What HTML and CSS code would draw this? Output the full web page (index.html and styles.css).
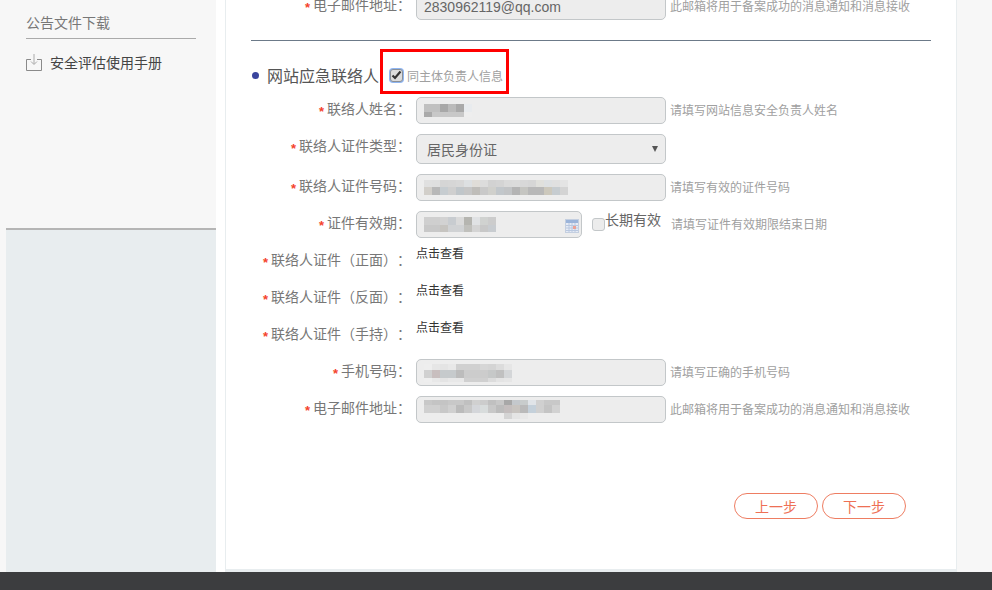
FILE: index.html
```html
<!DOCTYPE html>
<html lang="zh-CN">
<head>
<meta charset="utf-8">
<title>网站应急联络人</title>
<link rel="stylesheet" href="styles.css">
</head>
<body>
<div class="main">
  <aside class="sidebar">
    <div class="side-top">
      <div class="side-title">公告文件下载</div>
      <a class="side-link">
        <svg class="dl-icon" width="16" height="17" viewBox="0 0 16 17" fill="none" stroke="#8a8a8a" stroke-width="1">
          <path d="M5 5.500H.5v11h15v-11H11"/>
          <path d="M8 0v10M5 7.500 8 10.500 11 7.500" stroke="#aaa"/>
        </svg>
        <span>安全评估使用手册</span>
      </a>
    </div>
    <div class="side-lower"></div>
  </aside>
  <div class="gutter"></div>
  <main class="card">
    <form class="form">
      <div class="row">
        <label class="label"><i class="star">*</i>电子邮件地址<b class="colon">：</b></label>
        <div class="field"><span class="value">2830962119@qq.com</span></div>
        <span class="hint">此邮箱将用于备案成功的消息通知和消息接收</span>
      </div>

      <hr class="divider">

      <div class="section">
        <span class="bullet"></span>
        <h2 class="section-title">网站应急联络人</h2>
        <span class="check check-on">
          <svg width="11" height="10" viewBox="0 0 11 10"><path d="M1.500 5.500 4 8l5.500-6.500" fill="none" stroke="#333" stroke-width="2.200"/></svg>
        </span>
        <span class="check-text">同主体负责人信息</span>
        <div class="highlight"></div>
      </div>

      <div class="row">
        <label class="label"><i class="star">*</i>联络人姓名<b class="colon">：</b></label>
        <div class="field">
          <svg class="mosaic" width="48" height="13" viewBox="0 0 48 13">
            <rect x="0" y="0" width="16" height="8" fill="#c0c0c0"/><rect x="16" y="0" width="8" height="8" fill="#a8a8a8"/><rect x="24" y="0" width="8" height="8" fill="#bbb"/><rect x="32" y="0" width="8" height="8" fill="#a9a9a9"/><rect x="40" y="0" width="8" height="8" fill="#e8ebee"/>
            <rect x="0" y="8" width="8" height="5" fill="#aaa"/><rect x="8" y="8" width="32" height="5" fill="#c8c8c8"/><rect x="40" y="8" width="8" height="5" fill="#eee"/>
          </svg>
        </div>
        <span class="hint">请填写网站信息安全负责人姓名</span>
      </div>

      <div class="row row-select">
        <label class="label"><i class="star">*</i>联络人证件类型<b class="colon">：</b></label>
        <div class="field field-select"><span class="select-text">居民身份证</span><span class="caret"></span></div>
      </div>

      <div class="row">
        <label class="label"><i class="star">*</i>联络人证件号码<b class="colon">：</b></label>
        <div class="field">
          <svg class="mosaic" width="144" height="15" viewBox="0 0 144 15">
            <rect x="0" width="8" height="7" fill="#e0e0e0"/><rect x="8" width="8" height="7" fill="#dfdfdf"/><rect x="16" width="8" height="7" fill="#d5d5d5"/><rect x="24" width="8" height="7" fill="#d6d6d6"/><rect x="32" width="8" height="7" fill="#d8d8d8"/><rect x="40" width="8" height="7" fill="#dde0e2"/><rect x="48" width="8" height="7" fill="#e0ddd8"/><rect x="56" width="8" height="7" fill="#dcdcdc"/><rect x="64" width="8" height="7" fill="#d2d2d2"/><rect x="72" width="8" height="7" fill="#d4d4d4"/><rect x="80" width="8" height="7" fill="#dadada"/><rect x="88" width="8" height="7" fill="#dbdbdb"/><rect x="96" width="8" height="7" fill="#d8d8d8"/><rect x="104" width="8" height="7" fill="#d6d6d6"/><rect x="112" width="8" height="7" fill="#e0e0dc"/><rect x="120" width="8" height="7" fill="#dde0e2"/><rect x="128" width="8" height="7" fill="#e0e0e0"/><rect x="136" width="8" height="7" fill="#e4e4e4"/>
            <rect x="0" y="7" width="8" height="8" fill="#d2cfca"/><rect x="8" y="7" width="8" height="8" fill="#b8b8b8"/><rect x="16" y="7" width="8" height="8" fill="#c6ccd0"/><rect x="24" y="7" width="8" height="8" fill="#cfcfcf"/><rect x="32" y="7" width="8" height="8" fill="#c0c6ca"/><rect x="40" y="7" width="8" height="8" fill="#c6c6c6"/><rect x="48" y="7" width="8" height="8" fill="#bfbdb9"/><rect x="56" y="7" width="8" height="8" fill="#c9c9c9"/><rect x="64" y="7" width="8" height="8" fill="#d0d0cc"/><rect x="72" y="7" width="8" height="8" fill="#c2c7cb"/><rect x="80" y="7" width="8" height="8" fill="#c2c4c6"/><rect x="88" y="7" width="8" height="8" fill="#b4b4b4"/><rect x="96" y="7" width="8" height="8" fill="#c5c5c1"/><rect x="104" y="7" width="8" height="8" fill="#b8b8b8"/><rect x="112" y="7" width="8" height="8" fill="#b8b8b8"/><rect x="120" y="7" width="8" height="8" fill="#ccc8bc"/><rect x="128" y="7" width="8" height="8" fill="#c6ccd0"/><rect x="136" y="7" width="8" height="8" fill="#d4d4d4"/>
          </svg>
        </div>
        <span class="hint">请填写有效的证件号码</span>
      </div>

      <div class="row">
        <label class="label"><i class="star">*</i>证件有效期<b class="colon">：</b></label>
        <div class="field field-date">
          <svg class="mosaic" width="72" height="15" viewBox="0 0 72 15">
            <rect x="0" width="8" height="8" fill="#cfcfcf"/><rect x="8" width="8" height="8" fill="#cfcfcf"/><rect x="16" width="8" height="8" fill="#d2d2d2"/><rect x="24" width="8" height="8" fill="#c8ccd0"/><rect x="32" width="8" height="8" fill="#dadada"/><rect x="40" width="8" height="8" fill="#b5b5b0"/><rect x="48" width="8" height="8" fill="#e0e2e4"/><rect x="56" width="8" height="8" fill="#d0d2d0"/><rect x="64" width="8" height="8" fill="#ccc"/>
            <rect x="0" y="8" width="8" height="7" fill="#c8c8c8"/><rect x="8" y="8" width="8" height="7" fill="#c8c8c8"/><rect x="16" y="8" width="8" height="7" fill="#c6c4c0"/><rect x="24" y="8" width="8" height="7" fill="#d0d2d4"/><rect x="32" y="8" width="8" height="7" fill="#d0d2d4"/><rect x="40" y="8" width="8" height="7" fill="#c0c0bc"/><rect x="48" y="8" width="8" height="7" fill="#d4d4d4"/><rect x="56" y="8" width="8" height="7" fill="#c8c8c8"/><rect x="64" y="8" width="8" height="7" fill="#c8ccd0"/>
          </svg>
          <svg class="calendar" width="14" height="14" viewBox="0 0 14 14">
            <rect x=".5" y=".5" width="13" height="13" fill="#e6ebf5" stroke="#c4cfe0"/>
            <rect x="1" y="1" width="12" height="3" fill="#9bb4da"/>
            <path d="M1 6.500h12M1 9h12M1 11.500h12M4 4v9M7 4v9M10 4v9" stroke="#b9c8e0" stroke-width="1"/>
            <rect x="8" y="7" width="3" height="3" fill="#eba195"/>
          </svg>
        </div>
        <span class="check check-off"></span>
        <span class="long-term">长期有效</span>
        <span class="hint hint-date">请填写证件有效期限结束日期</span>
      </div>

      <div class="row">
        <label class="label"><i class="star">*</i>联络人证件<span class="paren">（</span>正面<span class="paren">）</span><b class="colon">：</b></label>
        <a class="view-link">点击查看</a>
      </div>
      <div class="row">
        <label class="label"><i class="star">*</i>联络人证件<span class="paren">（</span>反面<span class="paren">）</span><b class="colon">：</b></label>
        <a class="view-link">点击查看</a>
      </div>
      <div class="row">
        <label class="label"><i class="star">*</i>联络人证件<span class="paren">（</span>手持<span class="paren">）</span><b class="colon">：</b></label>
        <a class="view-link">点击查看</a>
      </div>

      <div class="row">
        <label class="label"><i class="star">*</i>手机号码<b class="colon">：</b></label>
        <div class="field">
          <svg class="mosaic mosaic-phone" width="88" height="18" viewBox="0 0 88 18">
            <rect x="0" width="8" height="6" fill="#eee"/><rect x="8" width="8" height="6" fill="#e6e6e6"/><rect x="16" width="8" height="6" fill="#e4e4e4"/><rect x="24" width="8" height="6" fill="#e8e8e8"/><rect x="32" width="24" height="6" fill="#d0d0d0"/><rect x="56" width="8" height="6" fill="#d6d6d6"/><rect x="64" width="8" height="6" fill="#d4d4d4"/><rect x="72" width="8" height="6" fill="#dcdcdc"/><rect x="80" width="8" height="6" fill="#e6e6e6"/>
            <rect x="0" y="6" width="8" height="8" fill="#d0d0d0"/><rect x="8" y="6" width="8" height="8" fill="#c8bebe"/><rect x="16" y="6" width="16" height="8" fill="#c6cacc"/><rect x="32" y="6" width="8" height="8" fill="#bcbcbc"/><rect x="40" y="6" width="24" height="8" fill="#ccc"/><rect x="64" y="6" width="8" height="8" fill="#c6c8c8"/><rect x="72" y="6" width="8" height="8" fill="#c0c0c0"/><rect x="80" y="6" width="8" height="8" fill="#d4d6d8"/>
            <rect x="0" y="14" width="8" height="4" fill="#eee"/><rect x="8" y="14" width="8" height="4" fill="#e8e8e8"/><rect x="16" y="14" width="8" height="4" fill="#e4e4e4"/><rect x="24" y="14" width="16" height="4" fill="#e8e8e8"/><rect x="40" y="14" width="24" height="4" fill="#d0d0d0"/><rect x="64" y="14" width="8" height="4" fill="#dcdcdc"/><rect x="72" y="14" width="8" height="4" fill="#e4e4e4"/><rect x="80" y="14" width="8" height="4" fill="#e6e6e6"/>
          </svg>
        </div>
        <span class="hint">请填写正确的手机号码</span>
      </div>

      <div class="row">
        <label class="label"><i class="star">*</i>电子邮件地址<b class="colon">：</b></label>
        <div class="field">
          <svg class="mosaic mosaic-email" width="136" height="19" viewBox="0 0 136 19">
            <rect x="0" width="8" height="5" fill="#c8c8c8"/><rect x="8" width="16" height="5" fill="#c4c4c4"/><rect x="24" width="16" height="5" fill="#c8c8c8"/><rect x="40" width="8" height="5" fill="#c0c0c0"/><rect x="48" width="8" height="5" fill="#d0d0d0"/><rect x="56" width="8" height="5" fill="#ccc"/><rect x="64" width="8" height="5" fill="#c0c0c0"/><rect x="72" width="8" height="5" fill="#c8c8c8"/><rect x="80" width="8" height="5" fill="#a8a8a8"/><rect x="88" width="8" height="5" fill="#c4c8cc"/><rect x="96" width="8" height="5" fill="#c8cccc"/><rect x="104" width="8" height="5" fill="#e0e4e8"/><rect x="112" width="8" height="5" fill="#d0d0d0"/><rect x="120" width="16" height="5" fill="#c8c8c8"/>
            <rect x="0" y="5" width="16" height="8" fill="#d0d0d0"/><rect x="16" y="5" width="8" height="8" fill="#c8c8c8"/><rect x="24" y="5" width="8" height="8" fill="#d0d0d0"/><rect x="32" y="5" width="8" height="8" fill="#bbb"/><rect x="40" y="5" width="8" height="8" fill="#c8c8c8"/><rect x="48" y="5" width="8" height="8" fill="#d4d6da"/><rect x="56" y="5" width="8" height="8" fill="#d8dcdc"/><rect x="64" y="5" width="8" height="8" fill="#c8c8c8"/><rect x="72" y="5" width="8" height="8" fill="#bcbcbc"/><rect x="80" y="5" width="8" height="8" fill="#c4bebe"/><rect x="88" y="5" width="8" height="8" fill="#c8c4c0"/><rect x="96" y="5" width="8" height="8" fill="#bababa"/><rect x="104" y="5" width="8" height="8" fill="#c4d0da"/><rect x="112" y="5" width="8" height="8" fill="#d0d0d0"/><rect x="120" y="5" width="8" height="8" fill="#c4c4c4"/><rect x="128" y="5" width="8" height="8" fill="#d2d2d2"/>
            <rect x="80" y="13" width="8" height="6" fill="#d4d4d4"/><rect x="88" y="13" width="8" height="6" fill="#e4e4e4"/><rect x="96" y="13" width="8" height="6" fill="#e8e8e8"/>
          </svg>
        </div>
        <span class="hint">此邮箱将用于备案成功的消息通知和消息接收</span>
      </div>

      <div class="actions">
        <button type="button" class="btn">上一步</button>
        <button type="button" class="btn">下一步</button>
      </div>
    </form>
  </main>
</div>
<footer class="footer"></footer>
</body>
</html>
```

FILE: styles.css
```css
* { box-sizing: border-box; }

html, body { height: 100%; }

body {
  margin: 0;
  height: 590px;
  overflow: hidden;
  background: #f7f7f7;
  color: #666;
  font-family: "Noto Sans CJK SC", "Liberation Sans", sans-serif;
  font-size: 14px;
  display: flex;
  flex-direction: column;
}

.main {
  height: 572px;
  display: flex;
  overflow: hidden;
}

/* sidebar */
.sidebar {
  margin-left: 6px;
  width: 210px;
  display: flex;
  flex-direction: column;
}

.side-top {
  height: 228px;
  padding: 0 20px;
}

.side-title {
  height: 39px;
  padding-top: 12px;
  line-height: 20px;
  border-bottom: 1px solid #aaa;
  color: #777;
}

.side-link {
  display: flex;
  align-items: center;
  gap: 8px;
  margin-top: 13px;
  height: 20px;
  color: #444;
}

.side-lower {
  flex: 1;
  background: #e8edef;
  border-top: 2px solid #b5b5b5;
}

.gutter {
  width: 9px;
  background: #fff;
}

/* card */
.card {
  width: 732px;
  height: 572px;
  padding-left: 25px;
  background: #fff;
  border-left: 1px solid #e8edef;
  border-right: 1px solid #e8edef;
  border-bottom: 3px solid #e8edef;
  overflow: hidden;
}

.form {
  width: 680px;
  margin-top: -7px;
}

.row {
  display: flex;
  align-items: flex-start;
  height: 27px;
  margin-bottom: 10px;
}

.row-select { height: 30px; }

.label {
  flex: none;
  width: 160px;
  margin-right: 5px;
  height: 27px;
  line-height: 23px;
  text-align: right;
  color: #777;
  white-space: nowrap;
  text-spacing-trim: space-all;
}

.star {
  display: inline-block;
  width: 8px;
  font-style: normal;
  font-weight: bold;
  font-size: 13px;
  color: #f4432c;
  font-family: "Liberation Sans", sans-serif;
  text-align: left;
  vertical-align: -2px;
  line-height: 14px;
}

.colon, .paren {
  font-family: "Noto Sans CJK TC", sans-serif;
  font-weight: normal;
}

.field {
  flex: none;
  position: relative;
  width: 250px;
  height: 27px;
  background: #ededed;
  border: 1px solid #c3c7c9;
  border-radius: 5px;
  padding-left: 7px;
  display: flex;
  align-items: center;
}

.value {
  font-family: "Liberation Sans", sans-serif;
  font-size: 14px;
  color: #666;
}

.mosaic { display: block; flex: none; }

.field-select {
  height: 30px;
  padding-left: 10px;
  justify-content: space-between;
  padding-right: 7px;
}

.select-text { color: #666; }

.caret {
  width: 0;
  height: 0;
  border-left: 3px solid transparent;
  border-right: 3px solid transparent;
  border-top: 6px solid #555;
}

.field-date {
  width: 166px;
  justify-content: space-between;
  padding-right: 2px;
}

.calendar {
  flex: none;
  margin-top: 2px;
}

.hint {
  margin-left: 4px;
  font-size: 12px;
  line-height: 25px;
  color: #a0a0a0;
  white-space: nowrap;
}

.hint-date { margin-left: 10px; }

.check {
  flex: none;
  display: flex;
  align-items: center;
  justify-content: center;
  width: 13px;
  height: 13px;
  border-radius: 3px;
}

.check-on {
  margin-left: 11px;
  background: #dcdcdc;
  border: 1px solid #8a8f96;
  box-shadow: 0 0 0 1px #8fb6f2;
}

.check-off {
  margin: 7px 0 0 10px;
  background: #ececec;
  border: 1px solid #c3c7c9;
}

.long-term {
  line-height: 17px;
  color: #666;
  white-space: nowrap;
}

.check-text {
  margin-left: 4px;
  font-size: 12px;
  color: #a0a0a0;
}

.view-link {
  font-size: 12px;
  line-height: 10px;
  color: #333;
  white-space: nowrap;
}

/* section heading */
.divider {
  margin: 20px 0 0;
  border: 0;
  height: 1px;
  background: #6c7a89;
}

.section {
  position: relative;
  display: flex;
  align-items: center;
  height: 30px;
  margin: 19px 0 7px;
}

.bullet {
  flex: none;
  width: 7px;
  height: 7px;
  margin: 0 8px 0 1px;
  border-radius: 50%;
  background: #3a459e;
}

.section-title {
  margin: 0;
  font-size: 16px;
  font-weight: normal;
  color: #555;
  white-space: nowrap;
}

.highlight {
  position: absolute;
  left: 129px;
  top: -11px;
  width: 129px;
  height: 45px;
  border: 3px solid #f00;
}

/* actions */
.actions {
  display: flex;
  justify-content: flex-end;
  gap: 4px;
  margin-top: 70px;
  padding-right: 25px;
}

.btn {
  width: 84px;
  height: 26px;
  padding: 0;
  background: #fff;
  border: 1px solid #ee7d62;
  border-radius: 13px;
  color: #ee7055;
  font-family: inherit;
  font-size: 14px;
  line-height: 22px;
}

.footer {
  height: 18px;
  background: #3c3d3f;
}
```
